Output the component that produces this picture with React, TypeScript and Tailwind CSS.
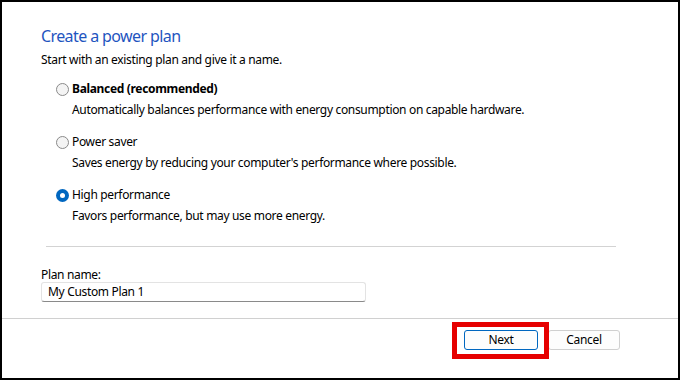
const Radio = ({ checked }: { checked?: boolean }) =>
	checked ? (
		<span className="w-[13px] h-[13px] rounded-full bg-[#0067c0] flex items-center justify-center shrink-0">
			<span className="w-[5px] h-[5px] rounded-full bg-white" />
		</span>
	) : (
		<span className="w-[13px] h-[13px] rounded-full border border-[#8a8a8a] bg-[#f4f4f4] shrink-0" />
	);

const plans = [
	{ name: "Balanced (recommended)", desc: "Automatically balances performance with energy consumption on capable hardware.", bold: true },
	{ name: "Power saver", desc: "Saves energy by reducing your computer's performance where possible." },
	{ name: "High performance", desc: "Favors performance, but may use more energy.", checked: true },
];

const App = () => {
	return (
		<div className="w-[680px] h-[380px] border-2 border-black bg-white flex flex-col text-black font-['Segoe_UI','Noto_Sans',sans-serif] text-[12px] tracking-[-0.33px]">
			<div className="flex-1 pl-[39px] pt-[24px]">
				<h1 className="text-[16px] leading-[20px] tracking-[-0.6px] text-[#1f55bf]">Create a power plan</h1>
				<p className="mt-[6px] leading-[16px]">Start with an existing plan and give it a name.</p>

				{plans.map((p, i) => (
					<div key={p.name} className={i === 0 ? "mt-[13px] ml-[15px]" : "mt-[16px] ml-[15px]"}>
						<label className="flex items-center gap-[3px] leading-[16px]">
							<Radio checked={p.checked} />
							<span className={p.bold ? "font-bold" : ""}>{p.name}</span>
						</label>
						<div className="mt-[5px] ml-[16px] leading-[16px]">{p.desc}</div>
					</div>
				))}

				<div className="mt-[22px] ml-[5px] w-[570px] h-px bg-[#d3d3d3]" />

				<div className="mt-[21px] leading-[14px]">Plan name:</div>
				<div className="w-[325px] h-[20px] border border-[#e3e3e3] border-b-[#8a8a8a] rounded-[3px] flex items-center px-[6px] leading-[16px]">
					My Custom Plan 1
				</div>
			</div>

			<div className="h-[60px] border-t border-[#d0d0d0] flex justify-end items-start pt-[11px] pr-[58px] gap-[10px]">
				<div className="relative">
					<button className="w-[74px] h-[20px] rounded-[3px] border border-[#0067c0] bg-[#fdfdfd] leading-[16px]">Next</button>
					<div className="absolute -left-[12px] -top-[8px] -right-[11px] -bottom-[9px] border-[5px] border-[#e60000]" />
				</div>
				<button className="w-[72px] h-[20px] rounded-[3px] border border-[#d0d0d0] bg-[#fdfdfd] leading-[16px]">Cancel</button>
			</div>
		</div>
	);
};

export default App;
